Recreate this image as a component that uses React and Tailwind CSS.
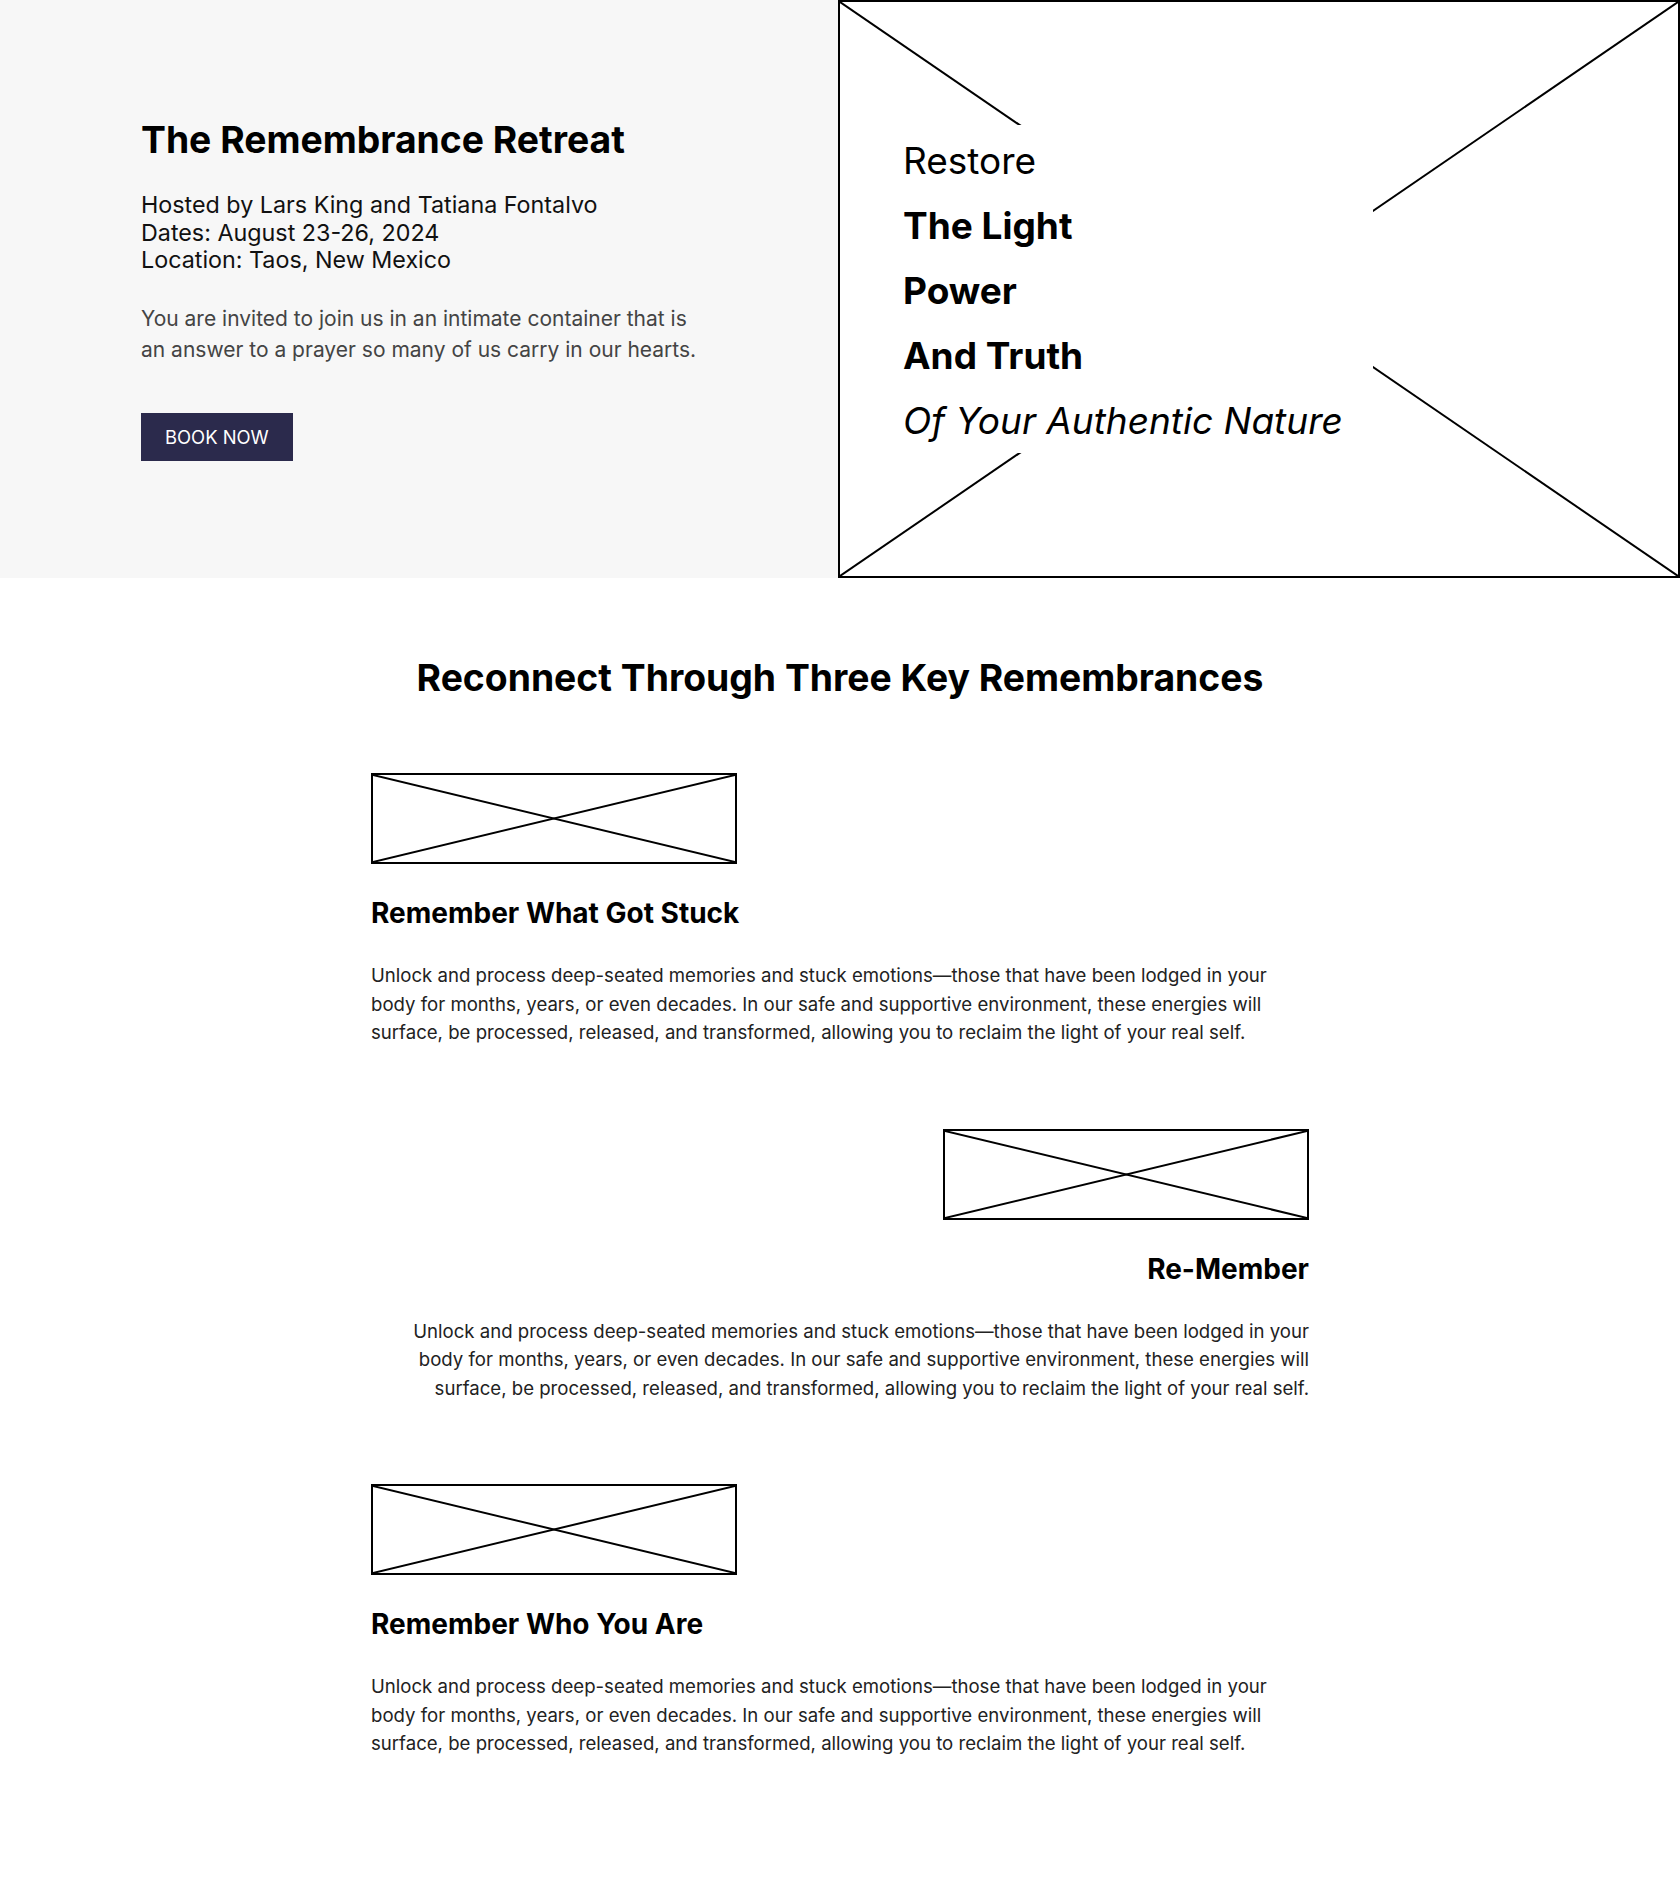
import React from 'react';

const ITEMS = [
  { title: 'Remember What Got Stuck', align: 'left' },
  { title: 'Re-Member', align: 'right' },
  { title: 'Remember Who You Are', align: 'left' },
];

const BODY =
  'Unlock and process deep-seated memories and stuck emotions\u2014those that have been lodged in your body for months, years, or even decades. In our safe and supportive environment, these energies will surface, be processed, released, and transformed, allowing you to reclaim the light of your real self.';

function Cross({ stroke = 2 }) {
  return (
    <svg className="absolute inset-0 h-full w-full" viewBox="0 0 100 100" preserveAspectRatio="none">
      <line x1="0" y1="0" x2="100" y2="100" stroke="#000" strokeWidth={stroke} vectorEffect="non-scaling-stroke" />
      <line x1="100" y1="0" x2="0" y2="100" stroke="#000" strokeWidth={stroke} vectorEffect="non-scaling-stroke" />
    </svg>
  );
}

function Placeholder() {
  return (
    <div className="relative h-[91px] w-[366px] border-[2.5px] border-black bg-white">
      <Cross />
    </div>
  );
}

function Hero() {
  return (
    <section className="flex h-[578px]">
      <div className="flex w-[838px] items-center bg-[#f7f7f7] pl-[141px] pt-[1px]">
        <div>
          <h1 className="text-[37.3px] font-bold leading-[44px] text-black">The Remembrance Retreat</h1>
          <div className="mt-[29px] text-[23.3px] leading-[27.5px] text-[#111]">
            <p>Hosted by Lars King and Tatiana Fontalvo</p>
            <p>Dates: August 23-26, 2024</p>
            <p>Location: Taos, New Mexico</p>
          </div>
          <p className="mt-[29px] w-[564px] text-[21px] leading-[31px] text-[#444]">
            You are invited to join us in an intimate container that is an answer to a prayer so many of us carry in our hearts.
          </p>
          <button className="mt-[48px] h-[48px] bg-[#2b2a4c] px-6 text-[18.4px] uppercase leading-[24px] text-white">
            Book Now
          </button>
        </div>
      </div>
      <div className="relative flex flex-1 items-center border-2 border-black bg-white pl-[47px]">
        <Cross />
        <div className="relative flex w-[486px] flex-col gap-[21px] bg-white pb-[10px] pl-4 pt-[14px] text-[37px] leading-[44px] text-black">
          <span>Restore</span>
          <span className="font-bold">The Light</span>
          <span className="font-bold">Power</span>
          <span className="font-bold">And Truth</span>
          <span className="italic">Of Your Authentic Nature</span>
        </div>
      </div>
    </section>
  );
}

function Remembrances() {
  return (
    <section className="pb-[130px] pt-[78px]">
      <h2 className="text-center text-[37.3px] font-bold leading-[44px] text-black">
        Reconnect Through Three Key Remembrances
      </h2>
      <div className="mx-auto mt-[73px] flex w-[938px] flex-col gap-[82px]">
        {ITEMS.map((it) => (
          <div key={it.title} className={it.align === 'right' ? 'flex flex-col items-end text-right' : 'flex flex-col items-start'}>
            <Placeholder />
            <h3 className="mt-[32px] text-[28px] font-bold leading-[34px] text-black">{it.title}</h3>
            <p className="mt-[31px] text-[18.6px] leading-[28.5px] text-[#222]">{BODY}</p>
          </div>
        ))}
      </div>
    </section>
  );
}

export default function App() {
  return (
    <div className="min-h-screen bg-white font-['Inter',sans-serif]">
      <Hero />
      <Remembrances />
    </div>
  );
}
